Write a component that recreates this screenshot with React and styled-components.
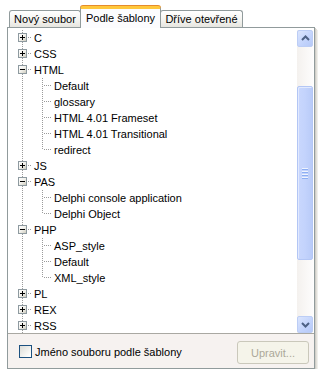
import React from 'react';
import styled, { createGlobalStyle } from 'styled-components';

const Global = createGlobalStyle`
  html, body { margin: 0; padding: 0; background: #fff; }
  body {
    font-family: "Liberation Sans", Arial, sans-serif;
    font-size: 11px;
    color: #000;
  }
`;

const Frame = styled.div`
  padding: 6px 0 0 7px;
  width: 308px;
`;

const TabRow = styled.div`
  display: flex;
  align-items: flex-end;
  height: 21px;
  padding-left: 2px;
  position: relative;
  z-index: 1;
`;

const Tab = styled.div`
  box-sizing: border-box;
  height: ${p => (p.$active ? 22 : 17)}px;
  margin-bottom: ${p => (p.$active ? -1 : 0)}px;
  width: ${p => p.$w}px;
  padding-top: ${p => (p.$active ? 3 : 2)}px;
  text-align: center;
  line-height: 13px;
  white-space: nowrap;
  border: 1px solid #919b9c;
  border-bottom: none;
  border-radius: 3px 3px 0 0;
  margin-left: ${p => (p.$first ? 0 : -1)}px;
  background: ${p => (p.$active ? '#fcfcfe' : 'linear-gradient(#ffffff, #f3f3ef 60%, #e6e5df)')};
  ${p =>
    p.$active &&
    `border-top: 3px solid #ffc83c;
     box-shadow: 0 -1px 0 #e68b2c;
     position: relative;
     z-index: 2;`}
`;

const Panel = styled.div`
  box-sizing: border-box;
  height: 342px;
  border: 1px solid #919b9c;
  background: #fff;
  display: flex;
  flex-direction: column;
  box-shadow: 1px 1px 0 #d0cec8, 2px 2px 0 #e2e0db, 3px 3px 0 #f0efeb;
`;

const TreeArea = styled.div`
  display: flex;
  height: 306px;
  padding: 2px 1px 0 0;
  box-sizing: border-box;
  border-bottom: 1px solid #a9a8a2;
`;

const TreeList = styled.div`
  flex: 1;
  overflow: hidden;
  padding-left: 4px;
`;

const Row = styled.div`
  display: flex;
  align-items: center;
  height: 16px;
`;

const Label = styled.span`
  padding: 1px 2px 0;
  line-height: 15px;
  white-space: nowrap;
`;

const CellSvg = styled.svg`
  display: block;
  flex: none;
`;

const DOT = '#9b9b9b';

function Cell({ up, down, right, box }) {
  return (
    <CellSvg width="20" height="16" viewBox="0 0 20 16" shapeRendering="crispEdges">
      {up && <line x1="10.5" y1="0" x2="10.5" y2="8" stroke={DOT} strokeDasharray="1 1" />}
      {down && <line x1="10.5" y1="8" x2="10.5" y2="16" stroke={DOT} strokeDasharray="1 1" />}
      {right && (
        <line x1={box ? 16 : 12} y1="7.5" x2="20" y2="7.5" stroke={DOT} strokeDasharray="1 1" />
      )}
      {box && (
        <g>
          <defs>
            <linearGradient id="bx" x1="0" y1="0" x2="1" y2="1">
              <stop offset="0" stopColor="#ffffff" />
              <stop offset="0.5" stopColor="#f2f1ec" />
              <stop offset="1" stopColor="#c9c6b8" />
            </linearGradient>
          </defs>
          <rect x="6.5" y="3.5" width="8" height="8" fill="url(#bx)" stroke="#8e9aa0" />
          <rect x="8" y="7" width="5" height="1" fill="#000" />
          {box === 'plus' && <rect x="10" y="5" width="1" height="5" fill="#000" />}
        </g>
      )}
    </CellSvg>
  );
}

const Scrollbar = styled.div`
  width: 16px;
  display: flex;
  flex-direction: column;
  background: linear-gradient(to right, #f4f1ee, #fdfcfc);
`;

const ScrollButton = styled.div`
  box-sizing: border-box;
  height: 17px;
  border: 1px solid #bccdf5;
  border-radius: 2px;
  background: linear-gradient(135deg, #dbe5fd, #c2d3fc 60%, #b6c9f7);
  display: flex;
  align-items: center;
  justify-content: center;
`;

const Gap = styled.div`
  height: ${p => p.$h}px;
`;

const Thumb = styled.div`
  box-sizing: border-box;
  height: ${p => p.$h}px;
  border: 1px solid #b3c6f5;
  border-radius: 2px;
  background: linear-gradient(to right, #c9d7fd, #c3d3fc 50%, #b9cbf8);
  box-shadow: inset 1px 1px 0 #e1e9fe;
  display: flex;
  align-items: center;
  justify-content: center;
`;

const Grip = styled.div`
  display: flex;
  flex-direction: column;
  gap: 1px;
`;

const GripLine = styled.div`
  width: 6px;
  height: 1px;
  background: #eef3fe;
  border-bottom: 1px solid #8caef3;
`;

const BottomBar = styled.div`
  flex: 1;
  display: flex;
  align-items: center;
  justify-content: space-between;
  padding: 1px 5px 0 11px;
  background: #f6f2f0;
`;

const CheckLabel = styled.label`
  display: flex;
  align-items: center;
  gap: 3px;
`;

const CheckBox = styled.span`
  box-sizing: border-box;
  width: 13px;
  height: 13px;
  border: 1px solid #1c5180;
  background: linear-gradient(135deg, #dcdcd7, #fbfbf9 80%, #ffffff);
`;

const Button = styled.div`
  box-sizing: border-box;
  width: 72px;
  height: 23px;
  border: 1px solid #cac8bb;
  border-radius: 3px;
  background: #f5f4ea;
  color: #aca899;
  display: flex;
  align-items: center;
  justify-content: center;
  margin-top: 2px;
`;

const Arrow = ({ dir }) => (
  <svg width="9" height="6" viewBox="0 0 9 6">
    <path
      d={dir === 'up' ? 'M1 5 L4.5 1.5 L8 5' : 'M1 1 L4.5 4.5 L8 1'}
      fill="none"
      stroke="#4d6185"
      strokeWidth="2"
    />
  </svg>
);

const tree = [
  { name: 'C' },
  { name: 'CSS' },
  { name: 'HTML', children: ['Default', 'glossary', 'HTML 4.01 Frameset', 'HTML 4.01 Transitional', 'redirect'] },
  { name: 'JS' },
  { name: 'PAS', children: ['Delphi console application', 'Delphi Object'] },
  { name: 'PHP', children: ['ASP_style', 'Default', 'XML_style'] },
  { name: 'PL' },
  { name: 'REX' },
  { name: 'RSS' },
];

export default function App() {
  const rows = [];
  tree.forEach(node => {
    rows.push(
      <Row key={node.name}>
        <Cell up down right box={node.children ? 'minus' : 'plus'} />
        <Label>{node.name}</Label>
      </Row>
    );
    if (node.children) {
      node.children.forEach((c, i) => {
        const last = i === node.children.length - 1;
        rows.push(
          <Row key={node.name + c}>
            <Cell up down />
            <Cell up down={!last} right />
            <Label>{c}</Label>
          </Row>
        );
      });
    }
  });

  return (
    <Frame>
      <Global />
      <TabRow>
        <Tab $first $w={72}>Nový soubor</Tab>
        <Tab $active $w={81}>Podle šablony</Tab>
        <Tab $w={83}>Dříve otevřené</Tab>
      </TabRow>
      <Panel>
        <TreeArea>
          <TreeList>{rows}</TreeList>
          <Scrollbar>
            <ScrollButton><Arrow dir="up" /></ScrollButton>
            <Gap $h={39} />
            <Thumb $h={175}>
              <Grip>
                <GripLine />
                <GripLine />
                <GripLine />
                <GripLine />
              </Grip>
            </Thumb>
            <Gap $h={56} />
            <ScrollButton><Arrow dir="down" /></ScrollButton>
          </Scrollbar>
        </TreeArea>
        <BottomBar>
          <CheckLabel>
            <CheckBox />
            <span>Jméno souboru podle šablony</span>
          </CheckLabel>
          <Button>Upravit...</Button>
        </BottomBar>
      </Panel>
    </Frame>
  );
}
